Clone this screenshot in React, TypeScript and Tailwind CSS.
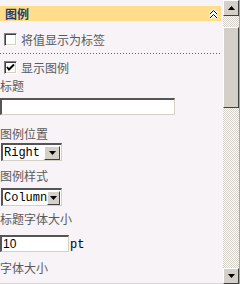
import React from "react";

const cjk = "font-['SimSun','Noto_Sans_CJK_SC',sans-serif]";

const Checkbox = ({ checked, label }: { checked?: boolean; label: string }) => (
  <div className="flex items-center h-[13px] pl-[4px] gap-[4px]">
    <div className="w-[13px] h-[13px] bg-white border-t border-l border-[#808080] border-r border-b border-r-[#fff] border-b-[#fff] shadow-[inset_1px_1px_0_#404040,inset_-1px_-1px_0_#d4d0c8] flex items-center justify-center">
      {checked && (
        <svg width="9" height="9" viewBox="0 0 9 9">
          <path d="M1 4 L3 6.5 L8 1.5" fill="none" stroke="#000" strokeWidth="2" />
        </svg>
      )}
    </div>
    <span className={`${cjk} text-[12px] leading-[13px] text-[#5a5a5a]`}>{label}</span>
  </div>
);

const Label = ({ text, className = "" }: { text: string; className?: string }) => (
  <div className={`${cjk} text-[12px] leading-[14px] h-[14px] text-[#5a5a5a] ${className}`}>{text}</div>
);

const Sunken = ({ className = "", children }: { className?: string; children?: React.ReactNode }) => (
  <div className={`bg-white border-t-2 border-l-2 border-t-[#555] border-l-[#555] border-r border-b border-r-[#d4d0c8] border-b-[#d4d0c8] ${className}`}>
    {children}
  </div>
);

const DropButton = () => (
  <div className="w-[16px] h-[14px] bg-[#d4d0c8] border border-t-white border-l-white border-r-[#404040] border-b-[#404040] flex items-center justify-center">
    <svg width="7" height="4" viewBox="0 0 7 4">
      <path d="M0 0 H7 L3.5 4 Z" fill="#000" />
    </svg>
  </div>
);

const Select = ({ value, className = "" }: { value: string; className?: string }) => (
  <Sunken className={`w-[61px] h-[18px] ml-[1px] flex items-center justify-between pr-[1px] ${className}`}>
    <span className="font-['Liberation_Mono',monospace] text-[12px] leading-[14px] text-black pl-[1px]">{value}</span>
    <DropButton />
  </Sunken>
);

const ScrollButton = ({ up }: { up?: boolean }) => (
  <div className="w-[16px] h-[16px] bg-[#d4d0c8] border border-t-white border-l-white border-r-[#404040] border-b-[#404040] flex items-center justify-center">
    <svg width="7" height="4" viewBox="0 0 7 4">
      <path d={up ? "M0 4 H7 L3.5 0 Z" : "M0 0 H7 L3.5 4 Z"} fill="#000" />
    </svg>
  </div>
);

export default function App() {
  return (
    <div className="w-[240px] h-[284px] flex overflow-hidden bg-[#f7f3f7]">
      <div className="w-[223px] h-[284px] flex flex-col border-b border-[#d8d4d8]">
        <div className="mt-[6px] h-[15px] w-[221px] bg-[#ffdd8a] flex items-center justify-between pl-[5px] pr-[3px]">
          <span className={`${cjk} text-[12px] font-bold leading-[15px] text-[#1e3d6b]`}>图例</span>
          <svg width="9" height="10" viewBox="0 0 9 10">
            <path d="M1 5 L4.5 1.5 L8 5 M1 9 L4.5 5.5 L8 9" fill="none" stroke="#fff" strokeWidth="3" />
            <path d="M1 5 L4.5 1.5 L8 5 M1 9 L4.5 5.5 L8 9" fill="none" stroke="#000" strokeWidth="1" />
          </svg>
        </div>
        <div className="mt-[12px]">
          <Checkbox label="将值显示为标签" />
        </div>
        <div className="mt-[7px] h-[1px] w-[221px] bg-[repeating-linear-gradient(90deg,#3366cc_0_1px,transparent_1px_3px)]" />
        <div className="mt-[7px]">
          <Checkbox checked label="显示图例" />
        </div>
        <Label text="标题" className="mt-[5px]" />
        <Sunken className="mt-[5px] w-[175px] h-[17px]" />
        <Label text="图例位置" className="mt-[12px]" />
        <Select value="Right" className="mt-[2px]" />
        <Label text="图例样式" className="mt-[8px]" />
        <Select value="Column" className="mt-[5px]" />
        <Label text="标题字体大小" className="mt-[6px]" />
        <div className="mt-[9px] flex items-end gap-[1px]">
          <Sunken className="w-[69px] h-[17px] flex items-center">
            <span className="font-['Liberation_Sans',sans-serif] text-[12px] leading-[13px] text-black pl-[1px]">10</span>
          </Sunken>
          <span className="font-['Liberation_Mono',monospace] text-[12px] leading-[13px] text-black">pt</span>
        </div>
        <Label text="字体大小" className="mt-[9px]" />
      </div>
      <div className="w-[17px] h-[284px] flex flex-col border-r border-[#8fa8d8] bg-[repeating-conic-gradient(#d4d0c8_0_25%,#ffffff_0_50%)] bg-[length:2px_2px]">
        <ScrollButton up />
        <div className="mt-[11px] h-[81px] w-[16px] bg-[#d4d0c8] border border-t-white border-l-white border-r-[#404040] border-b-[#404040]" />
        <div className="flex-1" />
        <ScrollButton />
      </div>
    </div>
  );
}
